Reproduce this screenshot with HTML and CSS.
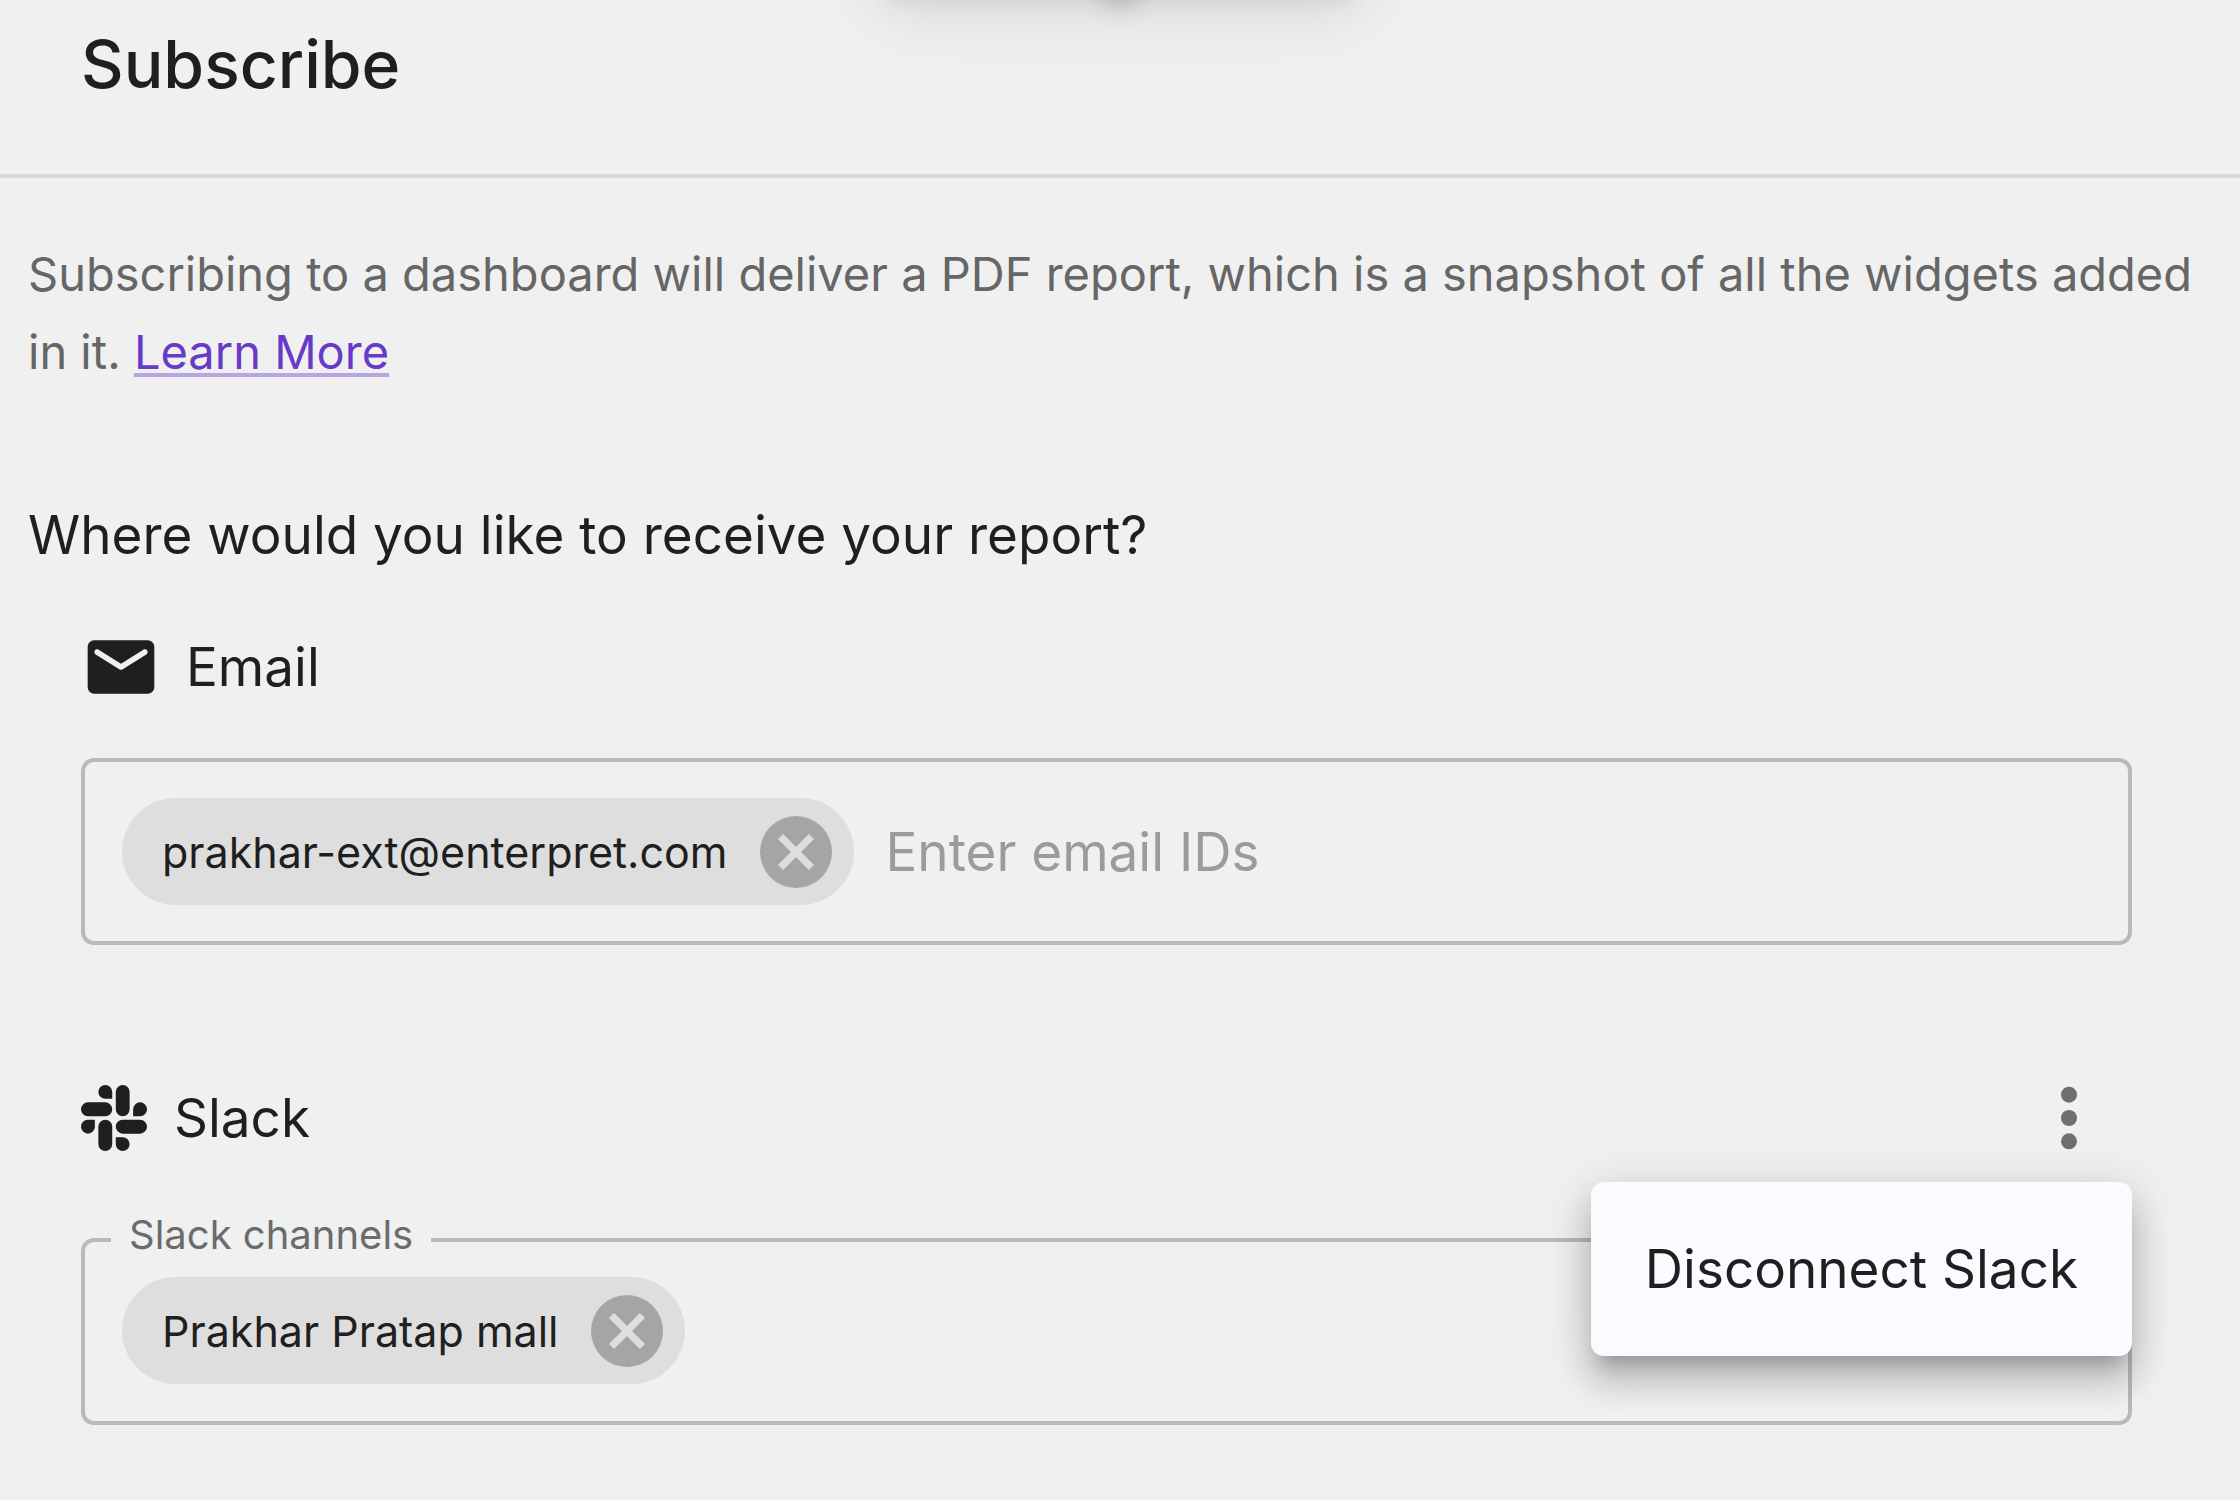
FILE: index.html
```html
<!DOCTYPE html>
<html lang="en">
<head>
<meta charset="utf-8">
<title>Subscribe</title>
<link rel="stylesheet" href="styles.css">
</head>
<body>
<div class="popover-shadow" aria-hidden="true"></div>
<header class="header">
  <h1 class="title">Subscribe</h1>
</header>
<main class="content">
  <p class="description">Subscribing to a dashboard will deliver a PDF report, which is a snapshot of all the widgets added in it. <a class="link" href="#">Learn More</a></p>
  <h2 class="question">Where would you like to receive your report?</h2>

  <section class="channel">
    <div class="channel-head">
      <svg class="icon-mail" viewBox="0 0 24 24" aria-hidden="true"><path fill="currentColor" d="M20 4H4c-1.100 0-2 .9-2 2v12c0 1.100.9 2 2 2h16c1.100 0 2-.9 2-2V6c0-1.100-.9-2-2-2zm-.4 4.250-7.070 4.420c-.32.2-.74.2-1.060 0L4.400 8.250c-.25-.16-.4-.43-.4-.72 0-.67.73-1.070 1.300-.72L12 11l6.700-4.190c.57-.35 1.300.05 1.300.72 0 .29-.15.56-.4.720z"/></svg>
      <label for="email">Email</label>
    </div>
    <div class="field">
      <span class="chip">prakhar-ext@enterpret.com
        <button class="chip-remove" type="button" aria-label="Remove prakhar-ext@enterpret.com"><svg viewBox="2 2 20 20"><circle cx="12" cy="12" r="10" fill="#a5a5a5"/><path d="M7.700 7.700l8.600 8.600M16.300 7.700l-8.600 8.600" stroke="#dedede" stroke-width="2" fill="none"/></svg></button>
      </span>
      <input class="field-input" id="email" type="email" placeholder="Enter email IDs">
    </div>
  </section>

  <section class="channel channel-slack">
    <div class="channel-head">
      <svg class="icon-slack" viewBox="0 0 24 24" aria-hidden="true"><path fill="currentColor" d="M5.042 15.165a2.528 2.528 0 0 1-2.520 2.523A2.528 2.528 0 0 1 0 15.165a2.527 2.527 0 0 1 2.522-2.520h2.520v2.520zM6.313 15.165a2.527 2.527 0 0 1 2.521-2.520 2.527 2.527 0 0 1 2.521 2.520v6.313A2.528 2.528 0 0 1 8.834 24a2.528 2.528 0 0 1-2.521-2.522v-6.313zM8.834 5.042a2.528 2.528 0 0 1-2.521-2.520A2.528 2.528 0 0 1 8.834 0a2.528 2.528 0 0 1 2.521 2.522v2.520H8.834zM8.834 6.313a2.528 2.528 0 0 1 2.521 2.521 2.528 2.528 0 0 1-2.521 2.521H2.522A2.528 2.528 0 0 1 0 8.834a2.528 2.528 0 0 1 2.522-2.521h6.312zM18.956 8.834a2.528 2.528 0 0 1 2.522-2.521A2.528 2.528 0 0 1 24 8.834a2.528 2.528 0 0 1-2.522 2.521h-2.522V8.834zM17.688 8.834a2.528 2.528 0 0 1-2.523 2.521 2.527 2.527 0 0 1-2.520-2.521V2.522A2.527 2.527 0 0 1 15.165 0a2.528 2.528 0 0 1 2.523 2.522v6.312zM15.165 18.956a2.528 2.528 0 0 1 2.523 2.522A2.528 2.528 0 0 1 15.165 24a2.527 2.527 0 0 1-2.520-2.522v-2.522h2.520zM15.165 17.688a2.527 2.527 0 0 1-2.520-2.523 2.526 2.526 0 0 1 2.520-2.520h6.313A2.527 2.527 0 0 1 24 15.165a2.528 2.528 0 0 1-2.522 2.523h-6.313z"/></svg>
      <h3 class="channel-name">Slack</h3>
      <div class="menu-anchor">
        <button class="more" type="button" aria-label="More options"><svg viewBox="0 0 24 24"><g fill="currentColor"><circle cx="12" cy="5" r="2.400"/><circle cx="12" cy="12" r="2.400"/><circle cx="12" cy="19" r="2.400"/></g></svg></button>
        <div class="menu"><button class="menu-item" type="button">Disconnect Slack</button></div>
      </div>
    </div>
    <fieldset class="outlined">
      <legend>Slack channels</legend>
      <span class="chip">Prakhar Pratap mall
        <button class="chip-remove" type="button" aria-label="Remove Prakhar Pratap mall"><svg viewBox="2 2 20 20"><circle cx="12" cy="12" r="10" fill="#a5a5a5"/><path d="M7.700 7.700l8.600 8.600M16.300 7.700l-8.600 8.600" stroke="#dedede" stroke-width="2" fill="none"/></svg></button>
      </span>
    </fieldset>
  </section>
</main>
</body>
</html>
```
FILE: styles.css
```css
* { box-sizing: border-box; }

body {
  margin: 0;
  background: #f0f0f0;
  color: #1f1f1f;
  font-family: Inter, "Liberation Sans", sans-serif;
  font-size: 53px;
  line-height: 80px;
}

h1, h2, h3, p { margin: 0; font-weight: 400; }
button, input { font: inherit; color: inherit; border: 0; background: none; padding: 0; }
button { cursor: pointer; }
svg { display: block; }

.header {
  padding: 24px 81px 70px;
  border-bottom: 4px solid #d8d8d8;
}
.title { font-size: 66px; font-weight: 500; }

/* Soft edge of the popover that hangs just above the panel */
.popover-shadow {
  position: absolute;
  top: -124px;
  left: 50%;
  width: 480px;
  height: 110px;
  margin-left: -240px;
  border-radius: 14px;
  box-shadow: 0 16px 24px -8px rgba(0, 0, 0, .09), 0 24px 44px rgba(0, 0, 0, .06), 0 14px 90px 14px rgba(0, 0, 0, .06);
}
.popover-shadow::after {
  content: "";
  position: absolute;
  bottom: 0;
  left: 50%;
  width: 24px;
  height: 24px;
  margin-left: -12px;
  box-shadow: 0 14px 26px 2px rgba(0, 0, 0, .24);
}

.content { padding: 57px 28px 74px; }
.description {
  color: #666;
  font-size: 47px;
  line-height: 78px;
}
.link {
  color: #673ac7;
  text-decoration: underline 4px #b9a5e3;
  text-underline-offset: 4px;
  text-decoration-skip-ink: none;
}
.question { margin-top: 104px; font-size: 53px; }

.channel { margin: 52px 80px 0 53px; }
.channel-slack { margin-top: 133px; }
.channel-head { display: flex; align-items: center; height: 80px; }
.channel-name { font-size: 53px; }
.icon-mail { width: 80px; height: 80px; margin-right: 25px; }
.icon-slack { width: 66px; height: 66px; margin-right: 27px; }

.field {
  display: flex;
  align-items: center;
  gap: 32px;
  margin-top: 51px;
  padding: 36px 37px;
  border: 4px solid #b9b9b9;
  border-radius: 13px;
}
.field-input { flex: 1; min-width: 0; height: 80px; outline: 0; }
.field-input::placeholder { color: #9b9b9b; opacity: 1; }

.chip {
  display: inline-flex;
  align-items: center;
  gap: 32px;
  height: 107px;
  padding: 0 22px 0 40px;
  border-radius: 54px;
  background: #dedede;
  font-size: 43px;
  white-space: nowrap;
}
.chip-remove { width: 72px; height: 72px; }

.outlined {
  display: flex;
  min-width: 0;
  margin: 57px 0 0;
  padding: 12px 37px 37px;
  border: 4px solid #b9b9b9;
  border-radius: 13px;
}
.outlined legend {
  margin-left: -11px;
  padding: 0 18px 10px;
  color: #6b6b6b;
  font-size: 40px;
  line-height: 40px;
}

.menu-anchor { display: flex; position: relative; margin-left: auto; padding-right: 23px; }
.more { width: 80px; height: 80px; color: #6f6f6f; }
.menu {
  position: absolute;
  z-index: 1;
  top: 104px;
  right: 0;
  padding: 26px 0;
  border-radius: 13px;
  background: #fbfbff;
  box-shadow: 0 17px 17px -10px rgba(0, 0, 0, .2), 0 26px 33px 3px rgba(0, 0, 0, .14), 0 10px 46px 7px rgba(0, 0, 0, .12);
}
.menu-item { display: block; padding: 21px 54px; white-space: nowrap; }
```
